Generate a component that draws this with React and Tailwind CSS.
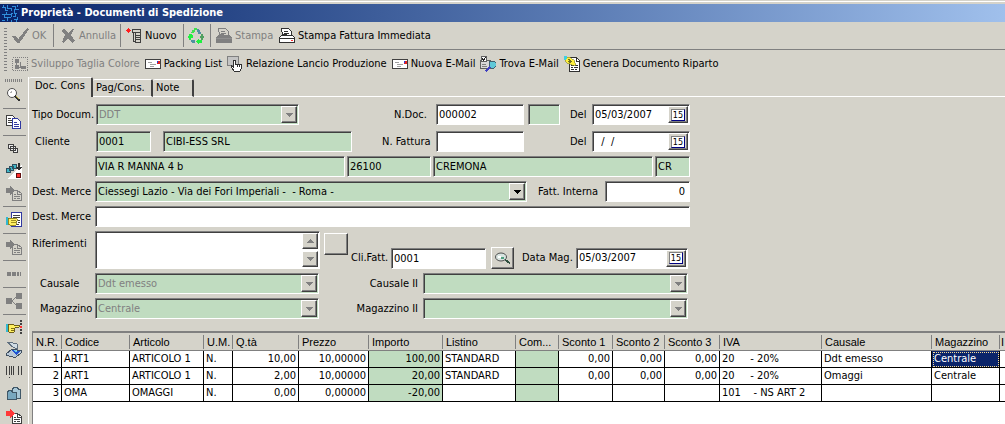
import React, { useState } from 'react';
import clsx from 'clsx';

const SUNKEN = 'border border-t-[#808080] border-l-[#808080] border-b-white border-r-white shadow-[inset_1px_1px_0_#404040]';
const RAISED = 'border border-t-white border-l-white border-b-[#404040] border-r-[#404040] shadow-[inset_-1px_-1px_0_#808080] bg-[#d5d3ca]';

const Svg = ({ children, className = 'w-4 h-4' }) => (
  <svg viewBox="0 0 16 16" shapeRendering="crispEdges" fill="none" className={clsx('shrink-0', className)} aria-hidden="true">
    {children}
  </svg>
);

/* ── Toolbar icons ─────────────────────────────── */
const LogoIcon = () => (
  <Svg className="w-[17px] h-[17px]">
    <rect width="16" height="16" fill="#0a246a" />
    <path
      d="M0 2.5h3v3h3M5.5 0v3h3v3M9 1.5h4v3h3M0 8.5h4v-2M2.5 9v3h3v3M5 8.5h4v3M8 11.5h-2M8.5 14v2M11.5 4v4h3M10 10.5h3v-2M11 13.5h4v-2M13.5 14v2M0 14.5h3M14.5 0v2M1.5 0v2M10.5 8h-2"
      stroke="#2f8ddb"
    />
  </Svg>
);

const OkIcon = () => (
  <Svg className="w-[17px] h-[17px]">
    <path d="M0 9l3-1 3 3 8-10 2 1-9 13H5z" fill="#808080" />
  </Svg>
);

const CancelIcon = () => (
  <Svg>
    <path d="M1 3l3-2 4 4 4-4 2 0-3 6 4 6-3 2-4-5-4 5-2-1 3-7z" fill="#808080" />
  </Svg>
);

const NewIcon = () => (
  <Svg>
    <path d="M0 2.500h5M2.500 0v5" stroke="#ff2020" />
    <path d="M1 1h3v3h-3z" fill="#ff2020" />
    <path d="M6.500 1.500h8v3h-8zM9.500 4.500h5v10h-5zM6 4.500h3M7.500 5v8h2M9 7.500h5M9 9.500h5M9 11.500h5" stroke="#404040" />
  </Svg>
);

const RecycleIcon = () => (
  <Svg>
    <path d="M6 0h3v2H7v2H6v1H3V4h1V2h2z" fill="#40e050" />
    <path d="M9 1h2v1h1v2h1v2h-3V4H9z" fill="#5090a0" />
    <path d="M1 6h3v1h1v3H3v2H1v-2H0V8h1z" fill="#20f040" />
    <path d="M13 6h2v2h1v2h-1v2h-2v-2h-1V8h1z" fill="#50a060" />
    <path d="M3 12h4v3H4v-1H3z" fill="#5090a0" />
    <path d="M8 13h1v-1h1v-1h1v1h3v3h-3v1h-1v-1H9v-1H8z" fill="#20f040" />
  </Svg>
);

const PrinterIcon = ({ disabled }) => (
  <Svg>
    <path d="M3.5 6.5l-1-6h7l3 3v4z" fill={disabled ? '#d5d3ca' : '#fff'} stroke={disabled ? '#808080' : '#303030'} />
    <path d="M5 3.5h4M5 5.5h5" stroke={disabled ? '#808080' : '#303030'} />
    <path d="M2.5 7.5h11l2 2v5h-15v-5z" fill={disabled ? '#808080' : '#fff'} stroke={disabled ? '#808080' : '#303030'} />
    <path d="M0 10.5h16" stroke={disabled ? '#909090' : '#303030'} />
    {!disabled && <path d="M12 12.5h2" stroke="#ff3030" />}
  </Svg>
);

const SizesIcon = () => (
  <Svg>
    <rect x=".5" y="1.5" width="15" height="13" stroke="#808080" strokeDasharray="1 1" />
    <path d="M3 3h4v4H3zM3 9h4v4H3zM9 10h5v3H9z" fill="#808080" />
    <path d="M4.5 7v2M7 11.5h3M8.5 6v5" stroke="#808080" />
  </Svg>
);

const MailIcon = () => (
  <Svg>
    <rect x=".5" y="3.5" width="15" height="9" fill="#fff" stroke="#404040" />
    <path d="M3 6.5h4M5 8.5h6M5 10.5h4" stroke="#a0a0a0" />
    <path d="M12 5h3v3h-3z" fill="#e02020" />
    <path d="M12 5h1v2h-1z" fill="#2040e0" />
  </Svg>
);

const HandIcon = () => (
  <Svg>
    <rect x=".5" y=".5" width="11" height="9" stroke="#808080" fill="#c4c4c4" />
    <path d="M6.500 11V4.500h1.500v4h6.500v4l-2 3h-5l-3-4v-2z" fill="#fff" stroke="#303030" />
    <path d="M10.500 8v3M12.500 8v3" stroke="#303030" />
  </Svg>
);

const FindMailIcon = () => (
  <Svg>
    <path d="M.5 4.500h10v8h-10z" fill="#d8d8d8" stroke="#606060" />
    <path d="M1 .5h5v5H1z" fill="#fff" stroke="#606060" />
    <path d="M2 2l1.500 2L6 1" stroke="#202020" />
    <path d="M10 5h4l2 2v3l-2 2h-3l-2-2z" fill="#60c8d8" stroke="#406070" />
    <path d="M9 10l2 1-4 5-2-1z" fill="#4040c0" />
    <path d="M2 8.500h4M2 10.500h5" stroke="#808080" />
  </Svg>
);

const GenerateIcon = () => (
  <Svg>
    <path d="M5.500 1.500h7l3 3v11h-10z" fill="#fff" stroke="#303030" />
    <path d="M7 9.500h3M11 9.500h3M7 11.500h2M10 11.500h4M7 13.500h3M11 13.500h2M12.500 2v3h3" stroke="#303030" />
    <path d="M1 2l4-1 5 3 2 5-4 0-5-2-2-2z" fill="#fff040" stroke="#808020" strokeWidth=".6" />
    <path d="M4 3l4 3M4 5l3 2" stroke="#707020" />
    <path d="M0 0h3v2l-2 2H0z" fill="#40d0e0" />
  </Svg>
);

/* ── Side bar icons ────────────────────────────── */
const SearchIcon = () => (
  <Svg>
    <circle cx="6" cy="6" r="4.500" fill="#fff" stroke="#505050" shapeRendering="auto" />
    <path d="M4 5h2M5 4h1" stroke="#b0b0b0" />
    <path d="M9 9l5 5" stroke="#303030" strokeWidth="2" />
    <path d="M10 9l3 3" stroke="#c0b040" />
  </Svg>
);

const CopyIcon = () => (
  <Svg>
    <path d="M.5 1.500h6l3 3v7h-9z" fill="#fff" stroke="#404040" />
    <path d="M2 4.500h3M2 6.500h4M2 8.500h4" stroke="#404040" />
    <path d="M6.500 4.500h5l3 3v7h-8z" fill="#fff" stroke="#3038a0" />
    <path d="M8 8.500h3M8 10.500h5M8 12.500h5" stroke="#3038a0" />
  </Svg>
);

const StackIcon = () => (
  <Svg>
    <path d="M2.500 3.500h5v4h-5zM4.500 5.500h5v4h-5zM7.500 7.500h4v4h-4z" fill="#eee" stroke="#404040" />
  </Svg>
);

const MoveIcon = () => (
  <Svg>
    <path d="M16 1v15H1z" fill="#fff" />
    <path d="M.5 5.500h4v4h-4zM3.500 3.500h4v4h-4zM6.500 1.500h4v4h-4z" fill="#40b8c8" stroke="#305060" />
    <path d="M12 0h2v4h2l-3 4-3-4h2z" fill="#303030" />
    <path d="M10.500 10.500h4v4h-4z" fill="#ff3030" stroke="#601010" />
  </Svg>
);

const ImportIcon = ({ color = '#808080', page = '#808080', fill = '#d5d3ca' }) => (
  <Svg>
    <path d="M6.500 5.500h5l4 3v7h-9z" fill={fill} stroke={page} />
    <path d="M8 9.500h2M8 11.500h6M8 13.500h2M11 13.500h3M11.500 6v3h3" stroke={page} />
    <path d="M0 3h4V1l5 4-5 5V8H0z" fill={color} />
  </Svg>
);

const HandDocIcon = () => (
  <Svg>
    <path d="M5.500.5h10v14h-10z" fill="#fff" stroke="#3038a0" />
    <path d="M7 3.500h7M7 5.500h7M12 8.500h2M12 10.500h2M7 12.500h6" stroke="#404040" />
    <path d="M2 6h5l4 1v2h-1v4l-4 1-4-2z" fill="#fff060" stroke="#807010" strokeWidth=".8" />
    <path d="M5 8.500h5M5 10.500h5" stroke="#a09020" />
    <path d="M0 5h2v8H0z" fill="#30b8d0" />
  </Svg>
);

const DotsIcon = () => (
  <Svg>
    <path d="M1 6h4v4H1zM6 6h4v4H6zM11 6h2v4h-2zM14 6h1v4h-1z" fill="#808080" />
  </Svg>
);

const ShareIcon = () => (
  <Svg>
    <path d="M0 5h6v6H0zM10 0h6v6h-6zM10 10h6v6h-6z" fill="#808080" />
    <path d="M6 8l4-4M6 8l4 4" stroke="#808080" />
  </Svg>
);

const PointIcon = () => (
  <Svg>
    <path d="M2 4h5l1 1h5v2H9v1l-1 4-4 1-2-2z" fill="#fff060" stroke="#605010" strokeWidth=".9" />
    <path d="M5 8.500h3M5 10.500h3" stroke="#807010" />
    <path d="M0 4h2v8H0z" fill="#30b8d0" />
    <path d="M14 0h2v2h-2zM14 3h2v2h-2zM14 9h2v2h-2zM14 12h2v2h-2z" fill="#404040" />
    <path d="M14 6h2v2h-2z" fill="#ff3030" />
  </Svg>
);

const ScannerIcon = () => (
  <Svg>
    <path d="M2 .5l9 1 1 6-6-3z" fill="#d0dce4" stroke="#607080" />
    <path d="M.5 11.500l5-4 10 1v2l-6 5-9-2z" fill="#b8c8d8" stroke="#405060" />
    <path d="M6 8l8 1-4 4z" fill="#2050d0" />
    <path d="M7 8l2 2 4-1z" fill="#60d0e8" />
  </Svg>
);

const BarcodeIcon = () => (
  <Svg>
    <path d="M.5 2v9M3 2v9M5.500 2v9M7.500 2v9M12 2v9M15 2v9" stroke="#404040" />
    <path d="M3 13h1v1H3z" fill="#404040" />
  </Svg>
);

const FolderIcon = () => (
  <Svg>
    <path d="M6.500 3.500l1-2h4l1 2h2v9h-8z" fill="#a8c8d8" stroke="#405868" />
    <path d="M1.500 6.500l1-2h3l1 2h4v7h-9z" fill="#78a8c0" stroke="#405868" />
  </Svg>
);

const Arrow = ({ up, disabled }) => (
  <svg viewBox="0 0 7 4" shapeRendering="crispEdges" className="w-[7px] h-1" aria-hidden="true">
    <path d={up ? 'M0 4h7L3.500 0z' : 'M0 0h7L3.500 4z'} fill={disabled ? '#808080' : '#000'} />
  </svg>
);

/* ── Controls ──────────────────────────────────── */
const Field = ({ className, green, ...props }) => (
  <input
    type="text"
    readOnly={green}
    className={clsx('h-[21px] min-w-0 shrink-0 pl-[2px] pr-1 outline-none', SUNKEN, green ? 'bg-[#c0dcc0]' : 'bg-white', className)}
    {...props}
  />
);

const Combo = ({ id, value, disabled, className }) => (
  <div className={clsx('relative h-[21px] shrink-0', className)}>
    <select
      id={id}
      disabled={disabled}
      defaultValue={value}
      className={clsx('block appearance-none w-full h-full pl-[2px] pr-5 bg-[#c0dcc0] outline-none opacity-100', SUNKEN, disabled ? 'text-[#808080]' : 'text-black')}
    >
      <option>{value}</option>
    </select>
    <span className={clsx('absolute right-[2px] top-[2px] bottom-[2px] w-4 flex items-center justify-center pointer-events-none', RAISED)}>
      <Arrow disabled={disabled} />
    </span>
  </div>
);

const DateField = ({ id, value, className }) => (
  <div className={clsx('flex h-[21px] shrink-0 bg-white p-px', SUNKEN, className)}>
    <input id={id} type="text" defaultValue={value} className="min-w-0 flex-1 pl-px outline-none bg-transparent whitespace-pre" />
    <button type="button" aria-label="Calendario" className={clsx('w-5 flex items-center justify-center', RAISED)}>
      <span className="flex items-center justify-center w-[14px] h-3 bg-white border border-[#808080] border-r-[#000080] border-b-[#000080] text-[9px] leading-[10px]">15</span>
    </button>
  </div>
);

const Label = ({ children, className, ...props }) => (
  <label className={clsx('shrink-0 whitespace-nowrap', className)} {...props}>{children}</label>
);

const ToolButton = ({ icon, children, disabled, className, ...props }) => (
  <button type="button" disabled={disabled} className={clsx('flex items-center gap-[3px] shrink-0 whitespace-nowrap', disabled && 'text-[#808080]', className)} {...props}>
    {icon}
    {children}
  </button>
);

const Divider = () => <div className="w-px h-[23px] bg-[#808080] shrink-0" />;

const sideGroups = [
  [['Cerca', <SearchIcon />]],
  [['Copia', <CopyIcon />]],
  [['Finestre', <StackIcon />], ['Sposta', <MoveIcon />], ['Importa', <ImportIcon />]],
  [['Dettagli', <HandDocIcon />]],
  [['Importa riga', <ImportIcon />]],
  [['Sequenza', <DotsIcon />]],
  [['Struttura', <ShareIcon />]],
  [
    ['Seleziona', <PointIcon />],
    ['Scanner', <ScannerIcon />],
    ['Codice a barre', <BarcodeIcon />],
    ['Cartelle', <FolderIcon />],
    ['Esci', <ImportIcon color="#ff3838" page="#404040" fill="#fff" />],
  ],
];

const tabs = [
  { name: 'Doc. Cons', width: 'w-[64px]' },
  { name: 'Pag/Cons.', width: 'w-[60px]' },
  { name: 'Note', width: 'w-[41px]' },
];

const columns = [
  { title: 'N.R.', width: 'w-[29px]', right: true },
  { title: 'Codice', width: 'w-[68px]' },
  { title: 'Articolo', width: 'w-[74px]' },
  { title: 'U.M.', width: 'w-[29px]' },
  { title: 'Q.tà', width: 'w-[66px]', right: true },
  { title: 'Prezzo', width: 'w-[70px]', right: true },
  { title: 'Importo', width: 'w-[74px]', right: true, green: true },
  { title: 'Listino', width: 'w-[73px]' },
  { title: 'Com...', width: 'w-[43px]', green: true },
  { title: 'Sconto 1', width: 'w-[54px]', right: true },
  { title: 'Sconto 2', width: 'w-[52px]', right: true },
  { title: 'Sconto 3', width: 'w-[55px]', right: true },
  { title: 'IVA', width: 'w-[102px]' },
  { title: 'Causale', width: 'w-[110px]' },
  { title: 'Magazzino', width: 'w-[68px]' },
  { title: 'I', width: '' },
];

const rows = [
  ['1', 'ART1', 'ARTICOLO 1', 'N.', '10,00', '10,00000', '100,00', 'STANDARD', '', '0,00', '0,00', '0,00', '20     - 20%', 'Ddt emesso', 'Centrale', ''],
  ['2', 'ART1', 'ARTICOLO 1', 'N.', '2,00', '10,00000', '20,00', 'STANDARD', '', '0,00', '0,00', '0,00', '20     - 20%', 'Omaggi', 'Centrale', ''],
  ['3', 'OMA', 'OMAGGI', 'N.', '0,00', '0,00000', '-20,00', '', '', '', '', '', '101    - NS ART 2', '', '', ''],
];

const RowsTable = () => {
  const [selected, setSelected] = useState('0-14');

  return (
    <div className="flex-1 ml-[3px] bg-white border-t-2 border-l border-[#808080] overflow-hidden">
      <table className="table-fixed w-full border-separate border-spacing-0">
        <thead>
          <tr className="bg-[#d5d3ca]">
            {columns.map(col => (
              <th key={col.title} className={clsx('group h-[18px] p-0 border-b border-[#808080] font-normal text-left font-["Liberation_Sans",sans-serif]', col.width)}>
                <div className="h-[14px] leading-[14px] pl-[3px] group-last:pl-px border-r group-last:border-r-0 border-[#808080] whitespace-nowrap">{col.title}</div>
              </th>
            ))}
          </tr>
        </thead>
        <tbody>
          {rows.map((row, r) => (
            <tr key={row[0]}>
              {row.map((cell, c) => {
                const key = `${r}-${c}`;
                return (
                  <td
                    key={key}
                    onClick={() => setSelected(key)}
                    className={clsx(
                      'h-[17px] p-0 pl-[2px] pr-[2px] leading-[16px] border-r last:border-r-0 border-b border-black whitespace-pre overflow-hidden',
                      columns[c].right && 'text-right',
                      selected === key && 'bg-[#0a246a] text-white outline outline-dotted outline-1 -outline-offset-2 outline-[#f5db95]',
                      selected !== key && columns[c].green && 'bg-[#c0dcc0]'
                    )}
                  >
                    {cell}
                  </td>
                );
              })}
            </tr>
          ))}
        </tbody>
      </table>
    </div>
  );
};

const DocumentForm = () => (
  <form className="pl-[3px] pt-[7px] flex flex-col gap-1 w-full max-w-[661px]">
    <div className="flex items-center pb-[2px]">
      <Label htmlFor="tipo" className="w-[64px]">Tipo Docum.</Label>
      <Combo id="tipo" value="DDT" disabled className="w-[203px]" />
      <Label htmlFor="ndoc" className="ml-auto w-[42px]">N.Doc.</Label>
      <Field id="ndoc" defaultValue="000002" className="w-[88px]" />
      <Field green aria-label="Serie" className="ml-1 w-8" />
      <Label htmlFor="del1" className="ml-[10px] w-[22px]">Del</Label>
      <DateField id="del1" value="05/03/2007" className="w-[98px]" />
    </div>

    <div className="flex items-center">
      <Label htmlFor="cliente" className="w-[64px] pl-[3px]">Cliente</Label>
      <Field id="cliente" green defaultValue="0001" className="w-[55px]" />
      <Field green aria-label="Ragione sociale" defaultValue="CIBI-ESS SRL" className="ml-3 w-[189px]" />
      <Label htmlFor="nfatt" className="ml-auto w-[54px]">N. Fattura</Label>
      <Field id="nfatt" className="w-[88px]" />
      <Label htmlFor="del2" className="ml-[46px] w-[22px]">Del</Label>
      <DateField id="del2" value="  /  /" className="w-[98px]" />
    </div>

    <div className="flex items-center gap-[2px] pl-[63px]">
      <Field green aria-label="Indirizzo" defaultValue="VIA R MANNA 4 b" className="w-[250px]" />
      <Field green aria-label="CAP" defaultValue="26100" className="w-[84px]" />
      <Field green aria-label="Città" defaultValue="CREMONA" className="w-[220px]" />
      <Field green aria-label="Provincia" defaultValue="CR" className="w-[35px]" />
    </div>

    <div className="flex items-center">
      <Label htmlFor="dest1" className="w-[63px]">Dest. Merce</Label>
      <Combo id="dest1" value={'Ciessegi Lazio - Via dei Fori Imperiali -\u00a0 - Roma -'} className="w-[432px]" />
      <Label htmlFor="interna" className="ml-auto w-[67px]">Fatt. Interna</Label>
      <Field id="interna" defaultValue="0" className="w-[85px] text-right" />
    </div>

    <div className="flex items-center">
      <Label htmlFor="dest2" className="w-[63px]">Dest. Merce</Label>
      <Field id="dest2" className="flex-1" />
    </div>

    <div className="flex flex-col gap-1 pr-[2px]">
      <div className="flex">
        <Label htmlFor="rif" className="w-[63px] pt-[6px]">Riferimenti</Label>
        <div className={clsx('flex h-[38px] w-[225px] shrink-0 bg-white p-px', SUNKEN)}>
          <textarea id="rif" className="flex-1 min-w-0 resize-none outline-none" />
          <div className="w-4 flex flex-col justify-between">
            <button type="button" aria-label="Su" className={clsx('h-4 flex items-center justify-center', RAISED)}><Arrow up disabled /></button>
            <button type="button" aria-label="Giù" className={clsx('h-4 flex items-center justify-center', RAISED)}><Arrow disabled /></button>
          </div>
        </div>
        <button type="button" aria-label="Riferimenti" className={clsx('ml-1 mt-[2px] w-6 h-[22px]', RAISED)} />
        <div className="self-end flex items-center ml-auto">
          <Label htmlFor="clifatt" className="w-10">Cli.Fatt.</Label>
          <Field id="clifatt" defaultValue="0001" className="w-[95px]" />
          <button type="button" aria-label="Cerca cliente" className={clsx('ml-[5px] w-[23px] h-[22px] flex items-center justify-center', RAISED)}>
            <Svg>
              <ellipse cx="6" cy="7" rx="5.500" ry="4" fill="#d8e4e0" stroke="#505050" shapeRendering="auto" />
              <path d="M3 6h3v2H3z" fill="#fff" />
              <path d="M6 7h3v2H6z" fill="#50a080" />
              <path d="M10 10l5 3" stroke="#305040" strokeWidth="2" />
            </Svg>
          </button>
          <Label htmlFor="datamag" className="ml-2 w-[54px]">Data Mag.</Label>
          <DateField id="datamag" value="05/03/2007" className="w-[112px]" />
        </div>
      </div>

      <div className="flex items-center">
        <Label htmlFor="causale" className="w-[63px] pl-2">Causale</Label>
        <Combo id="causale" value="Ddt emesso" disabled className="w-[224px]" />
        <Label htmlFor="causale2" className="ml-auto pr-[5px]">Causale II</Label>
        <Combo id="causale2" value="" disabled className="w-[265px]" />
      </div>

      <div className="flex items-center">
        <Label htmlFor="mag" className="w-[63px] pl-2">Magazzino</Label>
        <Combo id="mag" value="Centrale" disabled className="w-[224px]" />
        <Label htmlFor="mag2" className="ml-auto pr-[5px]">Magazzino II</Label>
        <Combo id="mag2" value="" disabled className="w-[265px]" />
      </div>
    </div>
  </form>
);

const App = () => {
  const [tab, setTab] = useState(0);

  return (
    <div className='min-h-screen flex flex-col overflow-hidden bg-[#d5d3ca] text-black text-[11px] leading-[14px] font-["DejaVu_Sans_Condensed","DejaVu_Sans",sans-serif]'>
      <header className="mt-px border-t border-white pt-[2px]">
        <div className="h-[18px] flex items-center gap-[2px] pl-[2px] bg-gradient-to-r from-[#0a246a] to-[#a0c0ec] text-white font-bold">
          <LogoIcon />
          <h1>Proprietà - Documenti di Spedizione</h1>
        </div>
      </header>

      <div className="flex h-[55px] pl-1 gap-[2px]">
        <div className="my-[6px] w-[3px] bg-[repeating-linear-gradient(to_bottom,#808080_0_1px,transparent_1px_3px)]" />
        <div className="flex-1 min-w-0">
          <div className="flex items-center h-7 pl-[3px] border-b border-[#808080]">
            <ToolButton icon={<OkIcon />} disabled className="w-[41px]">OK</ToolButton>
            <Divider />
            <ToolButton icon={<CancelIcon />} disabled className="ml-[6px] w-[60px]">Annulla</ToolButton>
            <Divider />
            <ToolButton icon={<NewIcon />} className="ml-[5px] w-[57px]">Nuovo</ToolButton>
            <Divider />
            <ToolButton icon={<RecycleIcon />} aria-label="Aggiorna" className="ml-1 w-[22px]" />
            <Divider />
            <ToolButton icon={<PrinterIcon disabled />} disabled className="ml-[5px] w-[63px]">Stampa</ToolButton>
            <ToolButton icon={<PrinterIcon />}>Stampa Fattura Immediata</ToolButton>
          </div>
          <div className="flex items-center h-[27px] pl-[3px] gap-[5px]">
            <ToolButton icon={<SizesIcon />} disabled>Sviluppo Taglia Colore</ToolButton>
            <ToolButton icon={<MailIcon />}>Packing List</ToolButton>
            <ToolButton icon={<HandIcon />}>Relazione Lancio Produzione</ToolButton>
            <ToolButton icon={<MailIcon />}>Nuova E-Mail</ToolButton>
            <ToolButton icon={<FindMailIcon />}>Trova E-Mail</ToolButton>
            <ToolButton icon={<GenerateIcon />}>Genera Documento Riparto</ToolButton>
          </div>
        </div>
      </div>

      <div className="flex flex-1">
        <nav className="w-7 shrink-0 flex flex-col items-center pt-[2px]">
          <div className="w-[18px] h-[3px] mb-[2px] bg-[repeating-linear-gradient(to_right,#808080_0_1px,transparent_1px_2px)]" />
          {sideGroups.map((group, i) => (
            <div key={i} className="flex flex-col items-center">
              {i > 0 && <div className="w-[23px] h-px my-[2px] bg-[#808080]" />}
              {group.map(([name, icon]) => (
                <button key={name} type="button" aria-label={name} className="h-[22px] flex items-center">{icon}</button>
              ))}
            </div>
          ))}
        </nav>

        <main className="flex-1 min-w-0 flex flex-col border-l border-white">
          <div role="tablist" className="flex items-end h-5 shrink-0">
            {tabs.map(({ name, width }, i) => (
              <button
                key={name}
                role="tab"
                type="button"
                aria-selected={tab === i}
                onClick={() => setTab(i)}
                className={clsx(
                  'shrink-0 text-left whitespace-nowrap border-t border-white border-r-2 border-r-[#404040] rounded-t-[2px]',
                  width,
                  tab === i ? 'h-5 pl-[6px] pb-[3px]' : 'h-[18px] pl-[3px] border-b border-b-white'
                )}
              >
                {name}
              </button>
            ))}
            <div className="flex-1 border-b border-white" />
          </div>
          <DocumentForm />
          <div className="h-3 shrink-0" />
          <RowsTable />
        </main>
      </div>
    </div>
  );
};

export default App;
